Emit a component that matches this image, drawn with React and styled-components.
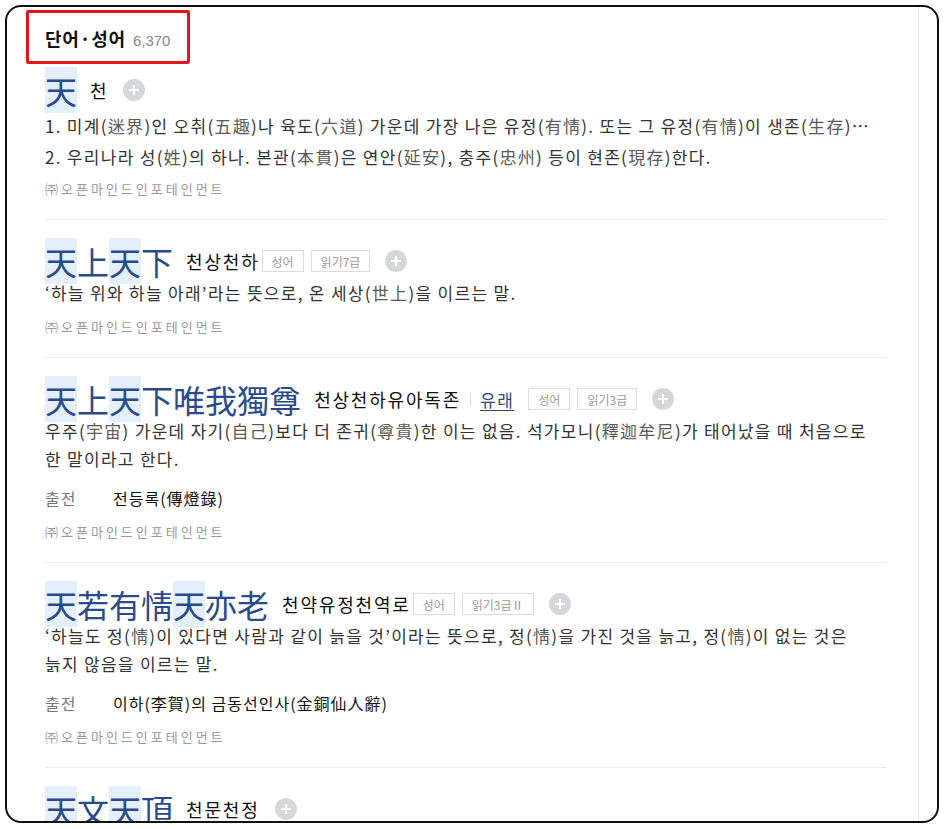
import React from "react";
import styled, { createGlobalStyle } from "styled-components";

const GlobalStyle = createGlobalStyle`
    * {
        margin: 0;
        padding: 0;
        box-sizing: border-box;
    }

    body {
        background: #fff;
        font-family: "Noto Sans CJK KR", "Noto Sans", sans-serif;
        color: #222;
    }
`;

const Frame = styled.div`
    margin: 5px;
    width: 934px;
    height: 818px;
    border: 2px solid #111;
    border-radius: 16px;
    overflow: hidden;
    background: #fff;
`;

const Panel = styled.div`
    width: 912px;
    height: 100%;
    border-right: 1px solid #e6e6e6;
`;

const HeaderWrap = styled.div`
    padding: 3px 0 0 19px;
`;

const HeaderBox = styled.div`
    display: inline-flex;
    align-items: baseline;
    gap: 7px;
    height: 54px;
    padding: 13px 17px 0 16px;
    border: 3px solid #e4141c;
    border-radius: 2px;

    h2 {
        font-size: 18px;
        font-weight: 700;
        color: #111;
        line-height: 24px;
        letter-spacing: 0.8px;
    }

    span {
        font-size: 15px;
        color: #888;
        font-family: "Liberation Sans", sans-serif;
    }
`;

const List = styled.ul`
    list-style: none;
    margin: 8px 0 0 38px;
    width: 841px;
`;

const Item = styled.li`
    padding: ${(p) => (p.$first ? "0" : "23px")} 0 19px;
    border-bottom: 1px solid #ebebeb;
`;

const TitleRow = styled.div`
    display: flex;
    align-items: center;
    height: 36px;
    white-space: nowrap;
`;

const Hanja = styled.span`
    font-size: 32px;
    line-height: 36px;
    color: #2b4a8b;
`;

const Mark = styled.span`
    background: #e3f0fc;
`;

const Reading = styled.span`
    font-size: 18px;
    color: #111;
    margin-left: 13px;
    letter-spacing: 1.8px;
`;

const Divider = styled.span`
    width: 1px;
    height: 14px;
    background: #ddd;
    margin: 0 9px 0 9px;
`;

const Origin = styled.a`
    font-size: 17px;
    color: #2f4c72;
    letter-spacing: 1.5px;
    text-decoration: underline;
    text-underline-offset: 3px;
    margin-right: 12px;
`;

const Tag = styled.span`
    display: inline-flex;
    align-items: center;
    height: 22px;
    padding: 0 9px;
    margin-left: ${(p) => (p.$first ? 2 : 7)}px;
    border: 1px solid #dcdcdc;
    font-size: 12px;
    color: #999;
`;

const PlusButton = styled.button`
    width: 22px;
    height: 22px;
    margin-left: 15px;
    border: none;
    border-radius: 50%;
    background: #d5d7db;
    display: inline-flex;
    align-items: center;
    justify-content: center;
`;

const Definitions = styled.ol`
    list-style: none;
    margin-top: 4px;

    li {
        font-size: 17px;
        line-height: 28px;
        letter-spacing: 1.3px;
        color: #333;
        margin-bottom: 3px;
        white-space: nowrap;
        overflow: hidden;
    }
`;

const Desc = styled.p`
    font-size: 17px;
    line-height: 28px;
    letter-spacing: 1.3px;
    color: #333;
    word-break: keep-all;
`;

const SourceRow = styled.div`
    display: flex;
    margin-top: 11px;
    font-size: 16px;
    line-height: 28px;
    letter-spacing: 1px;

    dt {
        width: 68px;
        color: #777;
    }

    dd {
        color: #111;
    }
`;

const Provider = styled.p`
    margin-top: ${(p) => p.$gap}px;
    font-size: 13px;
    line-height: 22px;
    color: #999;
    letter-spacing: 3px;
`;

const Han = styled.span`
    color: #5a5a5a;
`;

function Text({ children }) {
    let parts = children.split(/([\u4e00-\u9fff]+)/);
    return parts.map((part, i) =>
        /[\u4e00-\u9fff]/.test(part) ? <Han key={i}>{part}</Han> : part
    );
}

function Plus() {
    return (
        <PlusButton type="button" aria-label="단어장 추가">
            <svg width="12" height="12" viewBox="0 0 12 12">
                <path d="M6 1v10M1 6h10" stroke="#fff" strokeWidth="2" />
            </svg>
        </PlusButton>
    );
}

const entries = [
    {
        hanja: "天",
        marks: [0],
        reading: "천",
        defs: [
            "1. 미계(迷界)인 오취(五趣)나 육도(六道) 가운데 가장 나은 유정(有情). 또는 그 유정(有情)이 생존(生存)…",
            "2. 우리나라 성(姓)의 하나. 본관(本貫)은 연안(延安), 충주(忠州) 등이 현존(現存)한다.",
        ],
    },
    {
        hanja: "天上天下",
        marks: [0, 2],
        reading: "천상천하",
        tags: ["성어", "읽기7급"],
        desc: "‘하늘 위와 하늘 아래’라는 뜻으로, 온 세상(世上)을 이르는 말.",
    },
    {
        hanja: "天上天下唯我獨尊",
        marks: [0, 2],
        reading: "천상천하유아독존",
        origin: true,
        tags: ["성어", "읽기3급"],
        desc: "우주(宇宙) 가운데 자기(自己)보다 더 존귀(尊貴)한 이는 없음. 석가모니(釋迦牟尼)가 태어났을 때 처음으로 한 말이라고 한다.",
        source: "전등록(傳燈錄)",
    },
    {
        hanja: "天若有情天亦老",
        marks: [0, 4],
        reading: "천약유정천역로",
        tags: ["성어", "읽기3급Ⅱ"],
        desc: "‘하늘도 정(情)이 있다면 사람과 같이 늙을 것’이라는 뜻으로, 정(情)을 가진 것을 늙고, 정(情)이 없는 것은 늙지 않음을 이르는 말.",
        source: "이하(李賀)의 금동선인사(金銅仙人辭)",
    },
    {
        hanja: "天文天頂",
        marks: [0, 2],
        reading: "천문천정",
    },
];

function Entry({ entry, first }) {
    return (
        <Item $first={first}>
            <TitleRow>
                <Hanja>
                    {[...entry.hanja].map((ch, i) =>
                        entry.marks.includes(i) ? <Mark key={i}>{ch}</Mark> : ch
                    )}
                </Hanja>
                <Reading>{entry.reading}</Reading>
                {entry.origin && (
                    <>
                        <Divider />
                        <Origin href="#">유래</Origin>
                    </>
                )}
                {entry.tags &&
                    entry.tags.map((tag, i) => (
                        <Tag key={tag} $first={i === 0}>
                            {tag}
                        </Tag>
                    ))}
                <Plus />
            </TitleRow>
            {entry.defs && (
                <Definitions>
                    {entry.defs.map((d) => (
                        <li key={d}>
                            <Text>{d}</Text>
                        </li>
                    ))}
                </Definitions>
            )}
            {entry.desc && (
                <Desc>
                    <Text>{entry.desc}</Text>
                </Desc>
            )}
            {entry.source && (
                <SourceRow>
                    <dt>출전</dt>
                    <dd>{entry.source}</dd>
                </SourceRow>
            )}
            {entry.defs || entry.desc ? (
                <Provider $gap={entry.source ? 9 : entry.defs ? 7 : 9}>
                    ㈜오픈마인드인포테인먼트
                </Provider>
            ) : null}
        </Item>
    );
}

export default function App() {
    return (
        <>
            <GlobalStyle />
            <Frame>
                <Panel>
                    <HeaderWrap>
                        <HeaderBox>
                            <h2>단어·성어</h2>
                            <span>6,370</span>
                        </HeaderBox>
                    </HeaderWrap>
                    <List>
                        {entries.map((entry, i) => (
                            <Entry key={entry.hanja} entry={entry} first={i === 0} />
                        ))}
                    </List>
                </Panel>
            </Frame>
        </>
    );
}
